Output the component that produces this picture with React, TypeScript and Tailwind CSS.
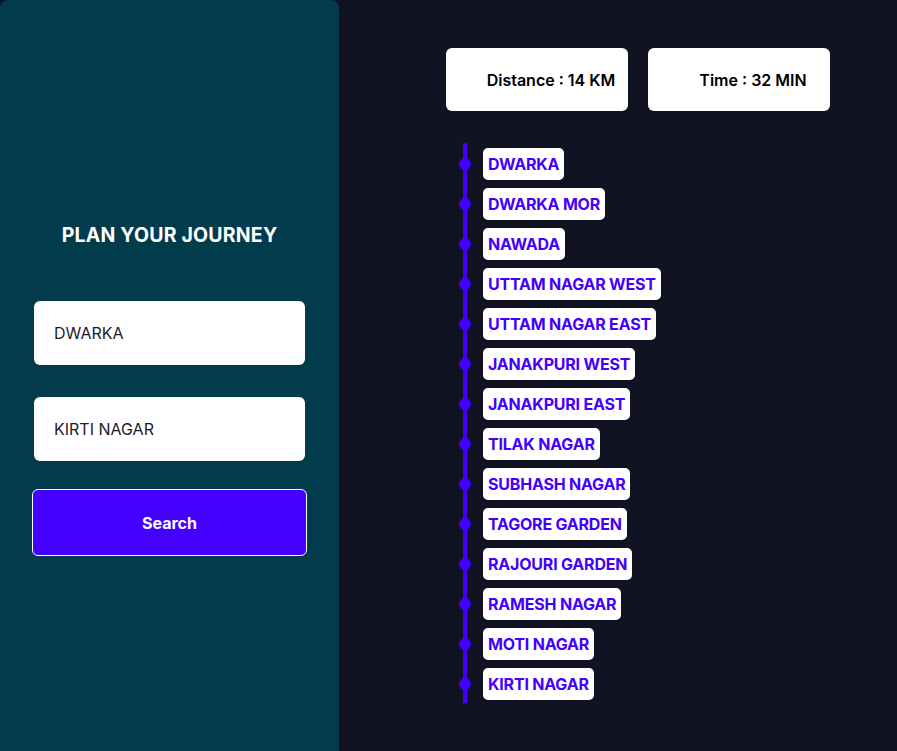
import React from 'react';

const stations = [
  'DWARKA',
  'DWARKA MOR',
  'NAWADA',
  'UTTAM NAGAR WEST',
  'UTTAM NAGAR EAST',
  'JANAKPURI WEST',
  'JANAKPURI EAST',
  'TILAK NAGAR',
  'SUBHASH NAGAR',
  'TAGORE GARDEN',
  'RAJOURI GARDEN',
  'RAMESH NAGAR',
  'MOTI NAGAR',
  'KIRTI NAGAR',
];

const App = () => {
  return (
    <div className="flex h-[751px] w-full bg-[#111322] font-['Inter',sans-serif]">
      {/* planner */}
      <div className="flex w-[339px] flex-col items-center rounded-t-lg bg-[#023b4c] pt-[223px]">
        <h1 className="text-[19.5px] font-bold leading-[24px] tracking-[0.2px] text-white">PLAN YOUR JOURNEY</h1>
        <input
          className="mt-[54px] h-[64px] w-[271px] rounded-md bg-white px-5 text-[16px] text-[#1c1a2c] outline-none"
          defaultValue="DWARKA"
        />
        <input
          className="mt-[32px] h-[64px] w-[271px] rounded-md bg-white px-5 text-[16px] text-[#1c1a2c] outline-none"
          defaultValue="KIRTI NAGAR"
        />
        <button className="mt-[28px] h-[67px] w-[275px] rounded-md border border-white bg-[#4400ff] text-[16px] font-bold text-white">
          Search
        </button>
      </div>

      {/* route */}
      <div className="flex-1 pl-[107px] pt-12">
        <div className="flex gap-5">
          <div className="flex h-[63px] w-[182px] items-center justify-center rounded-md bg-white pl-7 text-[16px] font-semibold text-black">
            Distance : 14 KM
          </div>
          <div className="flex h-[63px] w-[182px] items-center justify-center rounded-md bg-white pl-7 text-[16px] font-semibold text-black">
            Time : 32 MIN
          </div>
        </div>

        <div className="relative ml-[13px] mt-[32px]">
          <div className="absolute left-[4px] top-0 h-[560px] w-[4px] bg-[#4400ff]" />
          {stations.map((s) => (
            <div key={s} className="relative flex h-[40px] items-center pt-[2px]">
              <span className="h-[12px] w-[12px] rounded-full bg-[#4400ff]" />
              <span className="ml-[12px] rounded-[5px] bg-white px-[5px] py-[5px] text-[16px] font-bold leading-[22px] tracking-[-0.2px] text-[#4400ff]">
                {s}
              </span>
            </div>
          ))}
        </div>
      </div>
    </div>
  );
};

export default App;
